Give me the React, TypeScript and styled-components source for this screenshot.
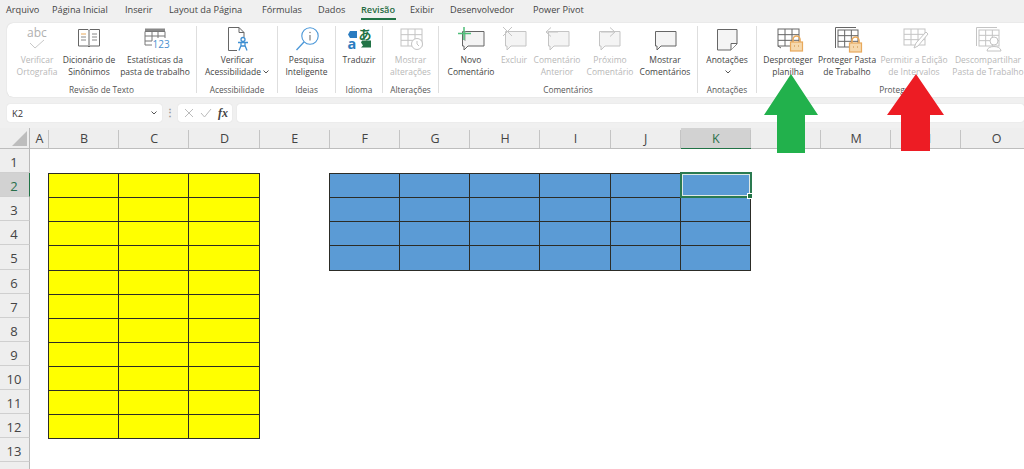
import React from "react";
import styled, { createGlobalStyle } from "styled-components";

const Global = createGlobalStyle`
  html, body { margin: 0; padding: 0; background: #f0f0f0; }
  body { font-family: "Open Sans", "Liberation Sans", sans-serif; color: #444; }
`;
const Page = styled.div`
  position: relative; width: 1024px; height: 469px; overflow: hidden; background: #f0f0f0;
`;
const Tabs = styled.nav`
  display: flex; height: 23px; padding-left: 6px; box-sizing: border-box;
  font-size: 9.2px; align-items: flex-start;
`;
const Tab = styled.div<{ $w: number; $active?: boolean }>`
  flex: none; width: ${p => p.$w}px; height: 21px; line-height: 20px; white-space: nowrap; position: relative;
  color: ${p => (p.$active ? "#1f6b41" : "#444")};
  font-weight: ${p => (p.$active ? 600 : 400)};
  ${p => p.$active && `&::after{content:"";position:absolute;left:0;width:35px;bottom:1px;height:2px;background:#217346;}`}
`;
const Ribbon = styled.section`
  display: flex; width: 1040px; height: 74px; margin-left: 7px; box-sizing: border-box;
  padding: 3px 0 4px; background: #fff; border-radius: 6px 0 0 6px; box-shadow: 0 0 1px #bbb;
`;
const Group = styled.div<{ $w: number; $pad?: number; $last?: boolean }>`
  flex: none; width: ${p => p.$w}px; box-sizing: border-box; display: flex; flex-direction: column;
  border-right: ${p => (p.$last ? "none" : "1px solid #dedede")};
  padding-left: ${p => p.$pad ?? 0}px;
`;
const Buttons = styled.div`
  flex: 1; display: flex; align-items: flex-start;
`;
const Btn = styled.div<{ $w?: number; $off?: boolean }>`
  ${p => (p.$w ? `flex: none; width: ${p.$w}px;` : "flex: 1;")}
  display: flex; flex-direction: column; align-items: center;
  color: ${p => (p.$off ? "#b8b8b8" : "#444")};
  font-size: 8.5px; line-height: 12px; white-space: nowrap; text-align: center;
`;
const IconBox = styled.div`
  height: 27px; margin-bottom: 1px; display: flex; justify-content: center;
`;
const GroupLabel = styled.div<{ $shift?: number }>`
  height: 14px; line-height: 13px; font-size: 8.3px; text-align: center; color: #555; white-space: nowrap;
  margin-left: ${p => -(p.$shift ?? 0)}px; margin-bottom: -4px;
`;
const Chevron = styled.svg`
  width: 6px; height: 4px; margin-left: 2px; vertical-align: 1px;
`;
const FormulaRow = styled.div`
  display: flex; align-items: stretch; height: 18px; margin: 7px 0 6px 7px;
`;
const NameBox = styled.div`
  flex: none; width: 155px; box-sizing: border-box; padding: 0 4px 0 5px; background: #fff; border-radius: 3px;
  display: flex; align-items: center; justify-content: space-between; font-size: 9.3px; color: #333;
  box-shadow: 0 0 1px #ccc;
`;
const Dots = styled.div`
  flex: none; width: 16px; text-align: center; color: #999; font-size: 10px; line-height: 16px; font-weight: 700;
`;
const FxBox = styled.div`
  flex: none; width: 54px; box-sizing: border-box; background: #fff; border-radius: 3px; box-shadow: 0 0 1px #ccc;
  display: flex; align-items: center; padding-left: 5px; gap: 5px; margin-right: 5px;
`;
const FxText = styled.span`
  font-family: "Liberation Serif", serif; font-style: italic; font-size: 12px; color: #444; font-weight: 700; margin-left: 1px;
`;
const Input = styled.div`
  flex: 1; background: #fff; border-radius: 3px; box-shadow: 0 0 1px #ccc;
`;
const Sheet = styled.div`
  display: grid; grid-template-columns: 30px 19px repeat(14, 70.2px);
  grid-template-rows: 21px repeat(13, 24.12px) 10px; background: #fff;
`;
const Corner = styled.div`
  background: #eee; border-right: 1px solid #b9b9b9; border-bottom: 1px solid #bdbdbd; box-sizing: border-box;
  display: flex; align-items: flex-end; justify-content: flex-end; padding: 0 2px 2px 0;
`;
const ColHead = styled.div<{ $sel?: boolean }>`
  position: relative; box-sizing: border-box; display: flex; align-items: center; justify-content: center;
  font-size: 12.5px;
  background: ${p => (p.$sel ? "#d2d2d2" : "#eee")};
  color: ${p => (p.$sel ? "#29704a" : "#444")};
  border-bottom: ${p => (p.$sel ? "1px solid #217346" : "1px solid #bdbdbd")};
  &::after { content: ""; position: absolute; right: 0; top: 2px; bottom: 0; width: 1px; background: #c4c4c4; }
`;
const RowHead = styled.div<{ $sel?: boolean }>`
  box-sizing: border-box; display: flex; align-items: center; justify-content: center; font-size: 13px;
  padding: 3px 1px 0 0;
  background: ${p => (p.$sel ? "#d2d2d2" : "#eee")};
  color: ${p => (p.$sel ? "#29704a" : "#444")};
  border-right: ${p => (p.$sel ? "1px solid #217346" : "1px solid #b9b9b9")};
  border-bottom: 1px solid #cfcfcf;
`;
const Cell = styled.div<{ $fill?: string; $active?: boolean }>`
  position: relative; box-sizing: border-box; background: ${p => p.$fill ?? "#fff"};
  ${p => p.$fill && "border: 1px solid #2c2c26; margin: 0 0 -1px -1px; z-index: 1;"}
  ${p => p.$active && "border: 2px solid #2a7a50; box-shadow: inset 0 0 0 1px #dfe9e6; z-index: 2; margin: -1px -1px -1px -1px;"}
`;
const Handle = styled.div`
  position: absolute; right: -3px; bottom: -3px; width: 4px; height: 4px; background: #217346; border: 1px solid #fff;
`;
const Arrow = styled.svg<{ $x: number; $y: number }>`
  position: absolute; left: ${p => p.$x}px; top: ${p => p.$y}px; z-index: 5;
`;

const D = "#666"; const O = "#c4c4c4"; const F = "#f4f4f4";
const Svg = styled.svg`width: 30px; height: 27px; overflow: visible;`;

const Grid = ({ x, y, w, h, c, cols = 3, rows = 3 }: any) => (
  <g stroke={c} fill="none" strokeWidth="1">
    <rect x={x} y={y} width={w} height={h} fill="#fff" />
    {Array.from({ length: cols - 1 }, (_, i) => <path key={i} d={`M${x + (w * (i + 1)) / cols} ${y}V${y + h}`} />)}
    {Array.from({ length: rows - 1 }, (_, i) => <path key={i} d={`M${x} ${y + (h * (i + 1)) / rows}H${x + w}`} />)}
  </g>
);
const Lock = ({ x, y }: { x: number; y: number }) => (
  <g transform={`translate(${x} ${y})`}>
    <path d="M3 7V4.5a3.5 3.5 0 0 1 7 0V7" fill="none" stroke="#e8a95c" strokeWidth="1.6" />
    <rect x="0.5" y="7" width="12" height="9" fill="#f6d9ae" stroke="#e8a95c" strokeWidth="1.2" />
    <path d="M4 11h1M8 11h1" stroke="#c98a3c" strokeWidth="1" />
  </g>
);
const Bubble = ({ c, x = 8, w = 20 }: { c: string; x?: number; w?: number }) => (
  <path d={`M${x + 0.5} 5.5H${x + w}V20H${x + 6}L${x + 2} 24V20H${x + 0.5}Z`} fill={F} stroke={c} strokeWidth="1" />
);

const icons: Record<string, React.ReactNode> = {
  abc: <><text x="15" y="11" textAnchor="middle" fontSize="12" fill="#b0b0b0" fontFamily="Open Sans">abc</text><path d="M8 17l5 5 9-8" fill="none" stroke="#c8c8c8" /></>,
  book: <><path d="M4.5 3.5H14l1 1 1-1h9.5V20H16l-1 1-1-1H4.5Z" fill="#fff" stroke={D} /><path d="M15 4.5V20" stroke={D} /><path d="M7 8h5" stroke="#e8a95c" /><path d="M7 11h5M7 14h5M18 8h5M18 11h5M18 14h5" stroke="#888" /></>,
  stats: <><rect x="5" y="2.5" width="20" height="3" fill="#888" /><path d="M5 5.5V19h7M5 5.5H25V12M5 10h20M5 15h7M12 5.5V15M18 5.5V12" fill="none" stroke="#777" /><text x="12.5" y="22" fontSize="10" fill="#4a90cf" fontFamily="Open Sans">123</text></>,
  access: <><path d="M6.5 1.5H17l5 5V11M6.5 1.5V24.5H15" fill="#fff" stroke={D} /><path d="M17 1.5V6.5H22" fill="none" stroke={D} /><g stroke="#3f8fd2" strokeWidth="1.3" fill="none"><circle cx="21" cy="13.5" r="2" /><path d="M16 16.5h10M19 16.5v3l-2 5M23 16.5v3l2 5M19 20h4" /></g></>,
  search: <><circle cx="18" cy="10" r="8.2" fill="#fff" stroke="#4a97d8" strokeWidth="1.1" /><path d="M12 16L4.5 24" stroke="#4a97d8" strokeWidth="1.3" /><path d="M18 9v5.5" stroke="#888" strokeWidth="1.3" /><circle cx="18" cy="6.5" r=".8" fill="#888" /></>,
  translate: <><path d="M13 5v7H6L4 8.500 6 5z" fill="#2a7cc0" /><text x="3.500" y="23" fontSize="14.500" fontWeight="700" fill="#2a7cc0" fontFamily="Open Sans">a</text><text x="14.500" y="12.500" fontSize="13" fontWeight="700" fill="#217346" fontFamily="'Noto Sans CJK JP'">あ</text><path d="M18 14.500h9v7h-10l2-2-2-3z" fill="#217346" /></>,
  changes: <><Grid x={5} y={3} w={21} h={17} c={O} cols={3} rows={3} /><circle cx="21" cy="18" r="5.5" fill="#fff" stroke={O} /><path d="M21 15v3l2 2" fill="none" stroke={O} /></>,
  novo: <><Bubble c={D} x={6} w={22} /><path d="M9 5V15" stroke="#9a9a9a" /><path d="M8 1v13M2 7.5h13" stroke="#4fbf7a" strokeWidth="1.5" /></>,
  del: <><Bubble c={O} x={6} w={21} /><path d="M4 1l9 9M13 1l-9 9" stroke={O} /></>,
  prev: <><Bubble c={O} x={6} w={21} /><path d="M16 6H5M9 1.500L4 6l5 4.500" fill="none" stroke={O} /></>,
  next: <><Bubble c={O} x={4} w={21} /><path d="M6 6h13M15 1.500L20 6l-5 4.500" fill="none" stroke={O} /></>,
  show: <Bubble c={D} x={5} w={21} />,
  note: <><path d="M5.500 3.500H25V18L19 24H5.500Z" fill={F} stroke={D} /><path d="M25 17.500H19V24" fill="#fff" stroke={D} /></>,
  unprot: <><Grid x={5} y={3} w={21} h={17} c={D} cols={3} rows={3} /><path d="M5 20l3 2" stroke={D} /><Lock x={17} y={9} /></>,
  prot: <><path d="M3.500 22V1.500H24" fill="none" stroke={D} /><Grid x={6} y={4} w={20} h={17} c={D} cols={3} rows={3} /><Lock x={17} y={10} /></>,
  edit: <><Grid x={5} y={3} w={21} h={16} c={O} cols={3} rows={3} /><path d="M15 22l2-5L27 6l2 2L19 20z" fill="#fff" stroke={O} /></>,
  share: <><path d="M3.500 20V1.500H24" fill="none" stroke={O} /><Grid x={6} y={4} w={20} h={16} c={O} cols={3} rows={3} /><circle cx="21" cy="15" r="4" fill="#fff" stroke={O} /><path d="M14 25c0-6 14-6 14 0z" fill="#fff" stroke={O} /></>,
};

type B = { icon: string; l: string[]; w?: number; off?: boolean; chev?: boolean };
type G = { label: string; w: number; pad?: number; last?: boolean; btns: B[] };
const groups: G[] = [
  { label: "Revisão de Texto", w: 190, pad: 7, btns: [
    { icon: "abc", l: ["Verificar", "Ortografia"], w: 46, off: true },
    { icon: "book", l: ["Dicionário de", "Sinônimos"], w: 58 },
    { icon: "stats", l: ["Estatísticas da", "pasta de trabalho"], w: 74 } ] },
  { label: "Acessibilidade", w: 81, btns: [{ icon: "access", l: ["Verificar", "Acessibilidade"], chev: true }] },
  { label: "Ideias", w: 58, btns: [{ icon: "search", l: ["Pesquisa", "Inteligente"] }] },
  { label: "Idioma", w: 47, btns: [{ icon: "translate", l: ["Traduzir"] }] },
  { label: "Alterações", w: 56, btns: [{ icon: "changes", l: ["Mostrar", "alterações"], off: true }] },
  { label: "Comentários", w: 259, pad: 3, btns: [
    { icon: "novo", l: ["Novo", "Comentário"], w: 58 },
    { icon: "del", l: ["Excluir"], w: 28, off: true },
    { icon: "prev", l: ["Comentário", "Anterior"], w: 58, off: true },
    { icon: "next", l: ["Próximo", "Comentário"], w: 48, off: true },
    { icon: "show", l: ["Mostrar", "Comentários"], w: 62 } ] },
  { label: "Anotações", w: 59, btns: [{ icon: "note", l: ["Anotações", "⌄"] }] },
  { label: "Proteger", w: 278, pad: 3, last: true, btns: [
    { icon: "unprot", l: ["Desproteger", "planilha"], w: 56 },
    { icon: "prot", l: ["Proteger Pasta", "de Trabalho"], w: 62 },
    { icon: "edit", l: ["Permitir a Edição", "de Intervalos"], w: 72, off: true },
    { icon: "share", l: ["Descompartilhar", "Pasta de Trabalho"], w: 76, off: true } ] },
];
const tabs: [string, number][] = [["Arquivo", 46], ["Página Inicial", 73], ["Inserir", 44], ["Layout da Página", 93], ["Fórmulas", 56], ["Dados", 43], ["Revisão", 49], ["Exibir", 40], ["Desenvolvedor", 83], ["Power Pivot", 80]];
const cols = "ABCDEFGHIJKLMNO".split("");
const fillOf = (c: number, r: number) => {
  if (r >= 2 && r <= 12 && c >= 1 && c <= 3) return "#ffff00";
  if (r >= 2 && r <= 5 && c >= 5 && c <= 10) return "#5b9bd5";
  return undefined;
};
const Mark = ({ d, c }: { d: string; c: string }) => (
  <svg width="12" height="12" viewBox="0 0 12 12"><path d={d} fill="none" stroke={c} strokeWidth="1" /></svg>
);
const ChevPath = () => <path d="M.5.500L3 3 5.500.500" fill="none" stroke="#555" />;

export default function App() {
  return (
    <Page>
      <Global />
      <Tabs>{tabs.map(([t, w]) => <Tab key={t} $w={w} $active={t === "Revisão"}>{t}</Tab>)}</Tabs>
      <Ribbon>
        {groups.map(g => (
          <Group key={g.label} $w={g.w} $pad={g.pad} $last={g.last}>
            <Buttons>
              {g.btns.map(b => (
                <Btn key={b.icon} $w={b.w} $off={b.off}>
                  <IconBox><Svg viewBox="0 0 30 27">{icons[b.icon]}</Svg></IconBox>
                  {b.l.map((t, i) => (
                    <div key={i}>{t === "⌄" ? <Chevron viewBox="0 0 6 4"><ChevPath /></Chevron> : t}
                      {b.chev && i === 1 && <Chevron viewBox="0 0 6 4"><ChevPath /></Chevron>}
                    </div>
                  ))}
                </Btn>
              ))}
            </Buttons>
            <GroupLabel $shift={g.pad}>{g.label}</GroupLabel>
          </Group>
        ))}
      </Ribbon>
      <FormulaRow>
        <NameBox>K2<Chevron viewBox="0 0 6 4" style={{ width: 8 }}><ChevPath /></Chevron></NameBox>
        <Dots>⋮</Dots>
        <FxBox>
          <Mark d="M2 2l8 8M10 2l-8 8" c="#bbb" />
          <Mark d="M1 6l3.500 4L11 2" c="#bbb" />
          <FxText>fx</FxText>
        </FxBox>
        <Input />
      </FormulaRow>
      <Sheet>
        <Corner><svg width="15" height="15" viewBox="0 0 15 15"><path d="M0 15L15 0V15Z" fill="#bdbdbd" /></svg></Corner>
        {cols.map(c => <ColHead key={c} $sel={c === "K"}>{c}</ColHead>)}
        {Array.from({ length: 14 }, (_, ri) => {
          const r = ri + 1;
          return (
            <React.Fragment key={r}>
              <RowHead $sel={r === 2}>{r <= 13 ? r : ""}</RowHead>
              {cols.map((c, ci) => {
                const active = c === "K" && r === 2;
                return <Cell key={c} $fill={fillOf(ci, r)} $active={active}>{active && <Handle />}</Cell>;
              })}
            </React.Fragment>
          );
        })}
      </Sheet>
      <Arrow $x={763} $y={73} width="56" height="81" viewBox="0 0 56 81"><path d="M28 1L55 42H42V80H14V42H1Z" fill="#22b14c" /></Arrow>
      <Arrow $x={886} $y={73} width="59" height="79" viewBox="0 0 59 79"><path d="M30 1L58 42H44V78H15V42H1Z" fill="#ed1c24" /></Arrow>
    </Page>
  );
}
